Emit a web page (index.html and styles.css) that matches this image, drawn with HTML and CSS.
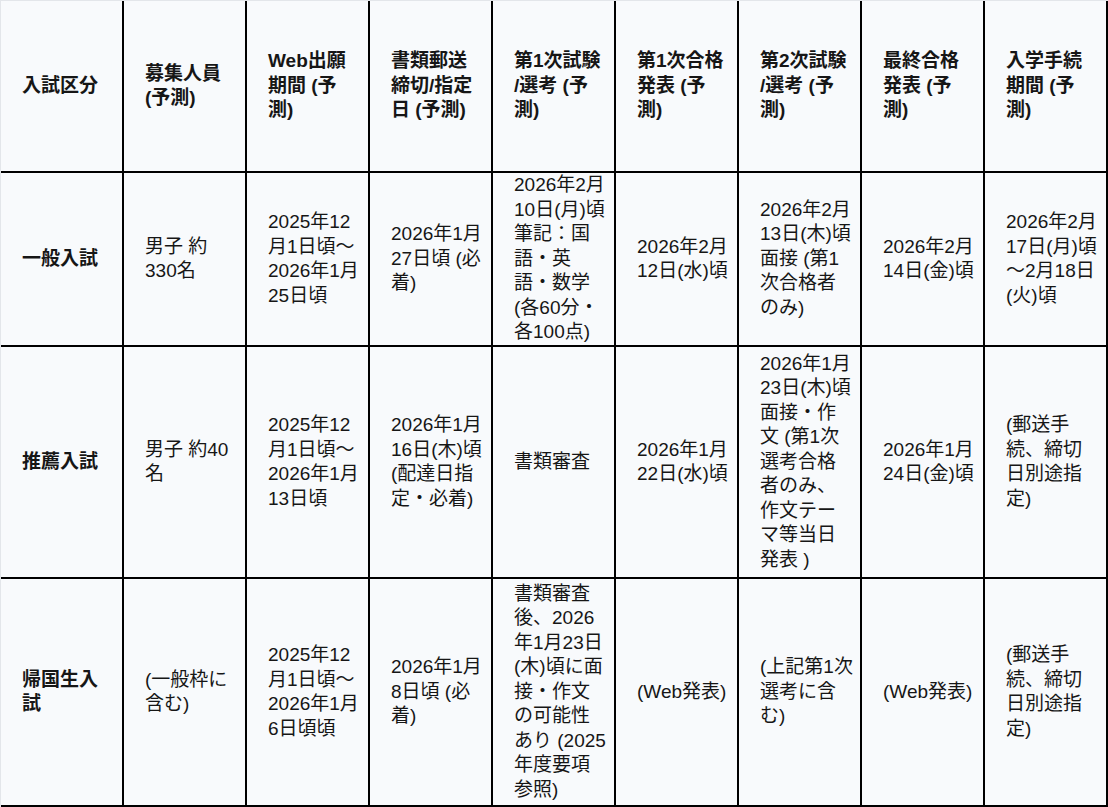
FILE: index.html
```html
<!DOCTYPE html>
<html lang="ja">
<head>
<meta charset="utf-8">
<title>入試日程</title>
<link rel="stylesheet" href="styles.css">
</head>
<body>
<table class="schedule">
  <thead>
    <tr class="row-head">
      <th>入試区分</th>
      <th>募集人員<br>(予測)</th>
      <th>Web出願<br>期間 (予<br>測)</th>
      <th>書類郵送<br>締切/指定<br>日 (予測)</th>
      <th>第1次試験<br>/選考 (予<br>測)</th>
      <th>第1次合格<br>発表 (予<br>測)</th>
      <th>第2次試験<br>/選考 (予<br>測)</th>
      <th>最終合格<br>発表 (予<br>測)</th>
      <th>入学手続<br>期間 (予<br>測)</th>
    </tr>
  </thead>
  <tbody>
    <tr class="row-1">
      <th>一般入試</th>
      <td>男子 約<br>330名</td>
      <td>2025年12<br>月1日頃～<br>2026年1月<br>25日頃</td>
      <td>2026年1月<br>27日頃 (必<br>着)</td>
      <td>2026年2月<br>10日(月)頃<br>筆記：国<br>語・英<br>語・数学<br>(各60分・<br>各100点)</td>
      <td>2026年2月<br>12日(水)頃</td>
      <td>2026年2月<br>13日(木)頃<br>面接 (第1<br>次合格者<br>のみ)</td>
      <td>2026年2月<br>14日(金)頃</td>
      <td>2026年2月<br>17日(月)頃<br>～2月18日<br>(火)頃</td>
    </tr>
    <tr class="row-2">
      <th>推薦入試</th>
      <td>男子 約40<br>名</td>
      <td>2025年12<br>月1日頃～<br>2026年1月<br>13日頃</td>
      <td>2026年1月<br>16日(木)頃<br>(配達日指<br>定・必着)</td>
      <td>書類審査</td>
      <td>2026年1月<br>22日(水)頃</td>
      <td>2026年1月<br>23日(木)頃<br>面接・作<br>文 (第1次<br>選考合格<br>者のみ、<br>作文テー<br>マ等当日<br>発表 )</td>
      <td>2026年1月<br>24日(金)頃</td>
      <td>(郵送手<br>続、締切<br>日別途指<br>定)</td>
    </tr>
    <tr class="row-3">
      <th>帰国生入<br>試</th>
      <td>(一般枠に<br>含む)</td>
      <td>2025年12<br>月1日頃～<br>2026年1月<br>6日頃頃</td>
      <td>2026年1月<br>8日頃 (必<br>着)</td>
      <td>書類審査<br>後、2026<br>年1月23日<br>(木)頃に面<br>接・作文<br>の可能性<br>あり (2025<br>年度要項<br>参照)</td>
      <td>(Web発表)</td>
      <td>(上記第1次<br>選考に含<br>む)</td>
      <td>(Web発表)</td>
      <td>(郵送手<br>続、締切<br>日別途指<br>定)</td>
    </tr>
  </tbody>
</table>
</body>
</html>
```

FILE: styles.css
```css
html, body {
  margin: 0;
  padding: 0;
}

body {
  background: #e3e6ea;
  font-family: "Liberation Sans", "Noto Sans CJK JP", sans-serif;
  font-size: 19px;
  line-height: 24.5px;
  color: #161616;
  overflow: hidden;
}

.schedule {
  margin: 1px 0 0 1px;
  width: 1107px;
  table-layout: fixed;
  border-collapse: separate;
  border-spacing: 0;
  background: #f8fafc;
}

.schedule th,
.schedule td {
  padding: 0 4px 0 21px;
  border-right: 2px solid #000;
  border-bottom: 2px solid #000;
  text-align: left;
  vertical-align: middle;
  white-space: nowrap;
  overflow: hidden;
}

.schedule th {
  font-weight: bold;
}

.schedule td {
  font-weight: normal;
}

.row-head { height: 172px; }
.row-1 { height: 174px; }
.row-2 { height: 232px; }
.row-3 { height: 228px; }
```
